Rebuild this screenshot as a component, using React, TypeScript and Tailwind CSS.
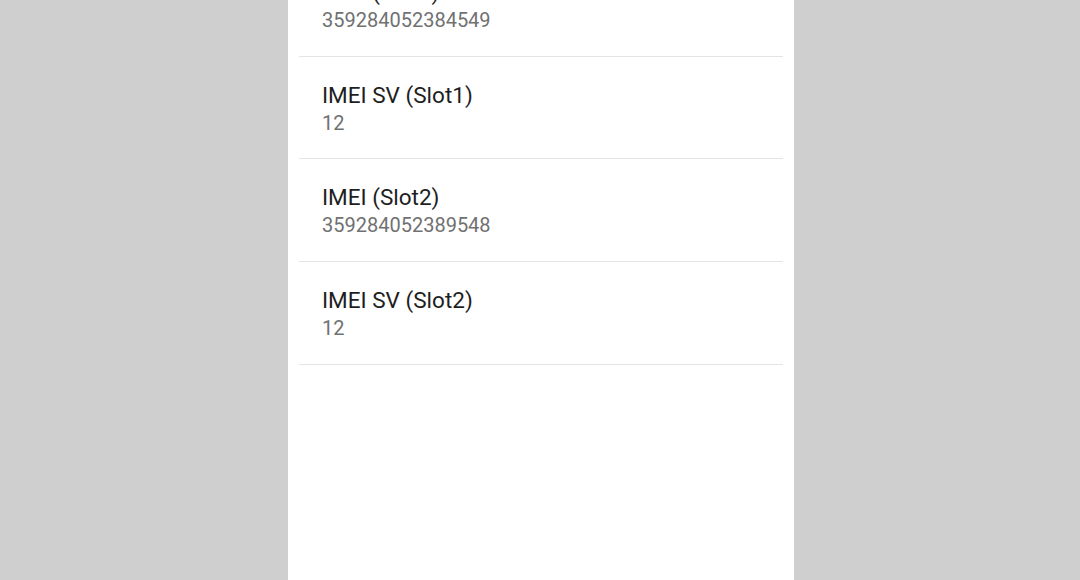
import React from "react";

const rows = [
  { title: "IMEI (Slot1)", value: "359284052384549" },
  { title: "IMEI SV (Slot1)", value: "12" },
  { title: "IMEI (Slot2)", value: "359284052389548" },
  { title: "IMEI SV (Slot2)", value: "12" },
];

function Row({ title, value }: { title: string; value: string }) {
  return (
    <div className="h-[102.67px] border-b border-[#e4e4e4] pl-[23px] pt-[23px]">
      <div className="text-[22.5px] leading-[30px] text-[#1e1e1e]">{title}</div>
      <div className="text-[20px] leading-[26px] text-[#717171]">{value}</div>
    </div>
  );
}

export default function App() {
  return (
    <div
      className="h-[580px] w-[1080px] bg-[#cfcfcf] overflow-hidden"
      style={{ fontFamily: "Roboto, 'Noto Sans', sans-serif" }}
    >
      <div className="ml-[288px] h-full w-[506px] overflow-hidden bg-white pl-[11px] pr-[11px]">
        <div className="-mt-[46px]">
          {rows.map((r, i) => (
            <Row key={i} title={r.title} value={r.value} />
          ))}
        </div>
      </div>
    </div>
  );
}
